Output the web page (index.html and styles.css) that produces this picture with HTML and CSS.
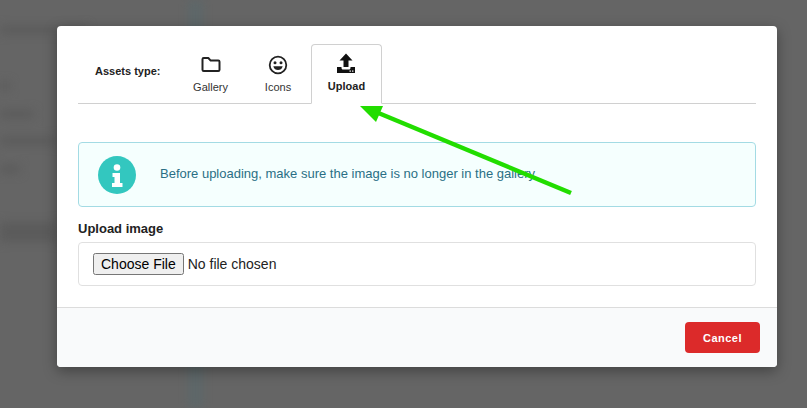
FILE: index.html
```html
<!DOCTYPE html>
<html lang="en">
<head>
<meta charset="utf-8">
<title>Assets</title>
<link rel="stylesheet" href="styles.css">
</head>
<body>
<div class="backdrop" aria-hidden="true">
  <div class="blur-stripe"></div>
  <div class="blur-line l1"></div>
  <div class="blur-line l2"></div>
  <div class="blur-line l3"></div>
  <div class="blur-line l4"></div>
  <div class="blur-line l5"></div>
  <div class="blur-line l6"></div>
</div>
<main class="stage">
  <section class="modal">
    <div class="modal-body">
      <div class="tabs">
        <span class="tabs-label">Assets type:</span>
        <div class="tab tab-gallery">
          <svg class="tab-icon" width="24" height="24" viewBox="0 0 24 24" fill="none" stroke="#222" stroke-width="2" stroke-linejoin="round"><path d="M3.500 6.200c0-.7.500-1.200 1.200-1.200h4.600l2.400 2.600h7.600c.7 0 1.200.5 1.200 1.200v8c0 .7-.5 1.200-1.200 1.200H4.700c-.7 0-1.200-.5-1.200-1.200z"/></svg>
          <span>Gallery</span>
        </div>
        <div class="tab tab-icons">
          <svg class="tab-icon" width="24" height="24" viewBox="0 0 24 24" fill="none" stroke="#222"><circle cx="12" cy="12" r="8.300" stroke-width="1.800"/><path d="M7.300 13.300c.7 2.600 2.500 3.800 4.700 3.800s4-1.200 4.700-3.800z" fill="#222" stroke="none"/><circle cx="9" cy="9.700" r="1.500" fill="#222" stroke="none"/><circle cx="15" cy="9.700" r="1.500" fill="#222" stroke="none"/></svg>
          <span>Icons</span>
        </div>
        <div class="tab tab-upload">
          <svg class="tab-icon" width="24" height="24" viewBox="0 0 24 24" fill="#111"><path d="M12 1.500l6.500 7h-4v6.500h-5V8.500h-4z"/><path d="M3 15h4.500v1c0 .8.700 1.500 1.500 1.500h6c.8 0 1.500-.7 1.500-1.500v-1H21v6H3z"/><rect x="15.500" y="18.500" width="1.400" height="1.200" fill="#fff"/><rect x="18" y="18.500" width="1.400" height="1.200" fill="#fff"/></svg>
          <span>Upload</span>
        </div>
      </div>
      <div class="alert">
        <svg class="alert-icon" width="38" height="38" viewBox="0 0 38 38"><circle cx="19" cy="19" r="19" fill="#33c7bf"/><circle cx="19" cy="11.500" r="3.300" fill="#fff"/><path d="M14.500 17h7.500v10h2.500v4h-10.500v-4h2.500v-6h-2z" fill="#fff"/></svg>
        <p class="alert-text">Before uploading, make sure the image is no longer in the gallery</p>
      </div>
      <label class="field-label" for="file">Upload image</label>
      <div class="file-box"><input class="file-input" id="file" type="file"></div>
    </div>
    <footer class="modal-footer">
      <button class="btn-cancel" type="button">Cancel</button>
    </footer>
  </section>
</main>
<svg class="arrow" width="807" height="408" viewBox="0 0 807 408" aria-hidden="true">
  <line x1="571" y1="193" x2="376" y2="112" stroke="#22dd00" stroke-width="4.500"/>
  <polygon points="360,106 383,106 376,122" fill="#22dd00"/>
</svg>
</body>
</html>
```
FILE: styles.css
```css
* { box-sizing: border-box; }
html, body { margin: 0; height: 408px; overflow: hidden; }
body {
  background: #656565;
  font-family: "Liberation Sans", Arial, sans-serif;
  color: #222;
  position: relative;
}
.backdrop { position: absolute; inset: 0; filter: blur(5px); overflow: hidden; }
.blur-stripe { position: absolute; left: 188px; top: -10px; width: 15px; height: 430px; background: #5d6769; }
.blur-line { position: absolute; height: 8px; background: #5b5b5b; }
.l1 { left: 0; top: 26px; width: 88px; }
.l2 { left: 0; top: 82px; width: 10px; }
.l3 { left: 0; top: 110px; width: 34px; }
.l4 { left: 0; top: 137px; width: 56px; }
.l5 { left: 0; top: 165px; width: 20px; }
.l6 { left: 0; top: 222px; width: 57px; height: 20px; }
.stage { position: relative; padding: 26px 0 0 57px; }
.modal {
  width: 720px;
  height: 341px;
  background: #fff;
  border-radius: 4px;
  box-shadow: 0 4px 14px rgba(0, 0, 0, .35);
  display: flex;
  flex-direction: column;
  overflow: hidden;
}
.modal-body { flex: 1; padding: 18px 21px 0; }
.tabs {
  display: flex;
  align-items: stretch;
  height: 60px;
  border-bottom: 1px solid #d0d0d0;
}
.tabs-label {
  font-size: 11px;
  font-weight: 700;
  width: 96px;
  padding: 21px 0 0 17px;
  white-space: nowrap;
}
.tab {
  width: 71px;
  display: flex;
  flex-direction: column;
  align-items: center;
  font-size: 11px;
  color: #333;
  padding-top: 9px;
}
.tab-icon { display: block; margin-bottom: 4px; }
.tab-gallery { margin-left: 1px; }
.tab-icons { width: 65px; }
.tab-icons .tab-icon { margin-right: 2px; }
.tab-icons span { margin-right: 1px; }
.tab-upload {
  height: 60px;
  border: 1px solid #d0d0d0;
  border-bottom: 1px solid #fff;
  border-radius: 4px 4px 0 0;
  background: #fff;
  font-weight: 700;
  color: #222;
  padding-top: 7px;
}
.tab-upload .tab-icon { margin-right: 2px; }
.alert {
  margin-top: 38px;
  height: 65px;
  padding: 0 0 2px 19px;
  background: #f5fffe;
  border: 1px solid #a3dbe4;
  border-radius: 4px;
  display: flex;
  align-items: center;
}
.alert-icon { flex: none; margin-top: 2px; }
.alert-text { margin: 0 0 0 24px; font-size: 13px; color: #2a6f85; }
.field-label { display: block; margin-top: 14px; font-size: 13px; font-weight: 700; line-height: 15px; }
.file-box {
  margin-top: 6px;
  height: 44px;
  border: 1px solid #e0e0e0;
  border-radius: 4px;
  display: flex;
  align-items: center;
  padding-left: 14px;
}
.file-input { font: 14px "Liberation Sans", Arial, sans-serif; color: #222; }
.modal-footer {
  height: 60px;
  background: #f9fafb;
  border-top: 1px solid #dcdcdc;
  display: flex;
  justify-content: flex-end;
  align-items: center;
  padding-right: 17px;
}
.btn-cancel {
  width: 75px;
  height: 31px;
  background: #dc2a2a;
  color: #fff;
  border: 0;
  border-radius: 4px;
  font: 700 11px "Liberation Sans", Arial, sans-serif;
  letter-spacing: .5px;
}
.arrow { position: absolute; left: 0; top: 0; pointer-events: none; }
```
